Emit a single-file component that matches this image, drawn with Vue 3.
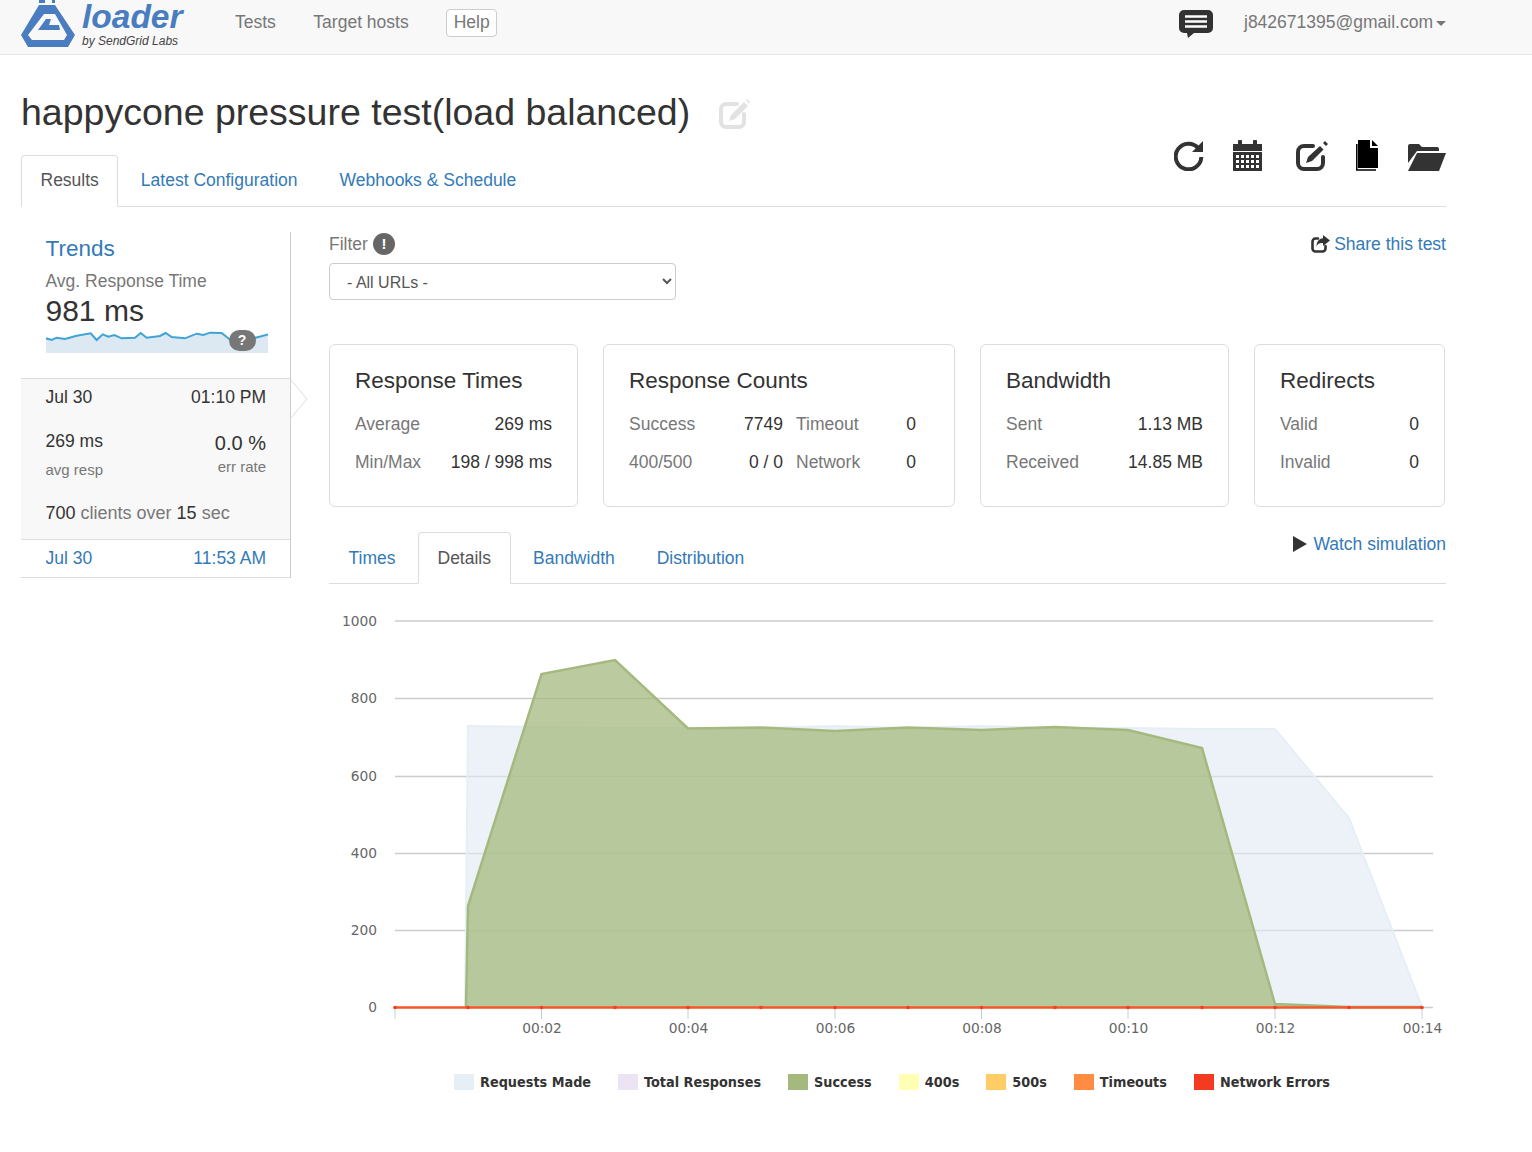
<script setup>
const sparkLine = "78,340 95,345 110,338 135,342 170,332 212,325 230,345 248,328 265,335 283,330 305,340 345,338 362,324 380,338 420,333 437,324 455,336 495,340 530,326 550,330 570,323 605,324 625,340 640,352 700,340 745,328";
const sparkArea = sparkLine + " 745,384 78,384";

const cards = [
  { title: "Response Times", cls: "c1", rows: [["Average", "269 ms"], ["Min/Max", "198 / 998 ms"]] },
  { title: "Response Counts", cls: "c2", rows: [["Success", "7749"], ["Timeout", "0"], ["400/500", "0 / 0"], ["Network", "0"]] },
  { title: "Bandwidth", cls: "c3", rows: [["Sent", "1.13 MB"], ["Received", "14.85 MB"]] },
  { title: "Redirects", cls: "c4", rows: [["Valid", "0"], ["Invalid", "0"]] }
];

const gridLines = [
  { y: 621, label: "1000" },
  { y: 698.5, label: "800" },
  { y: 776.5, label: "600" },
  { y: 853.5, label: "400" },
  { y: 930.5, label: "200" },
  { y: 1007.5, label: "0" }
];
const xTicks = [
  { x: 395, label: "" },
  { x: 541.5, label: "00:02" },
  { x: 688, label: "00:04" },
  { x: 835, label: "00:06" },
  { x: 981.5, label: "00:08" },
  { x: 1128, label: "00:10" },
  { x: 1275, label: "00:12" },
  { x: 1422, label: "00:14" }
];
const dots = [395, 468, 541.5, 615, 688, 761, 835, 908, 981.5, 1055, 1128, 1202, 1275, 1349, 1422];

const requests = "395,1007 465,1007 468,726 541,727 615,728 688,728 761,728 835,726 908,728 981,726 1055,728 1128,728 1202,729 1275,729 1349,818 1422,1007";
const success = "466,1007 468,906 541.5,674 615,660 688,728.5 761,727.5 835,731 908,727.5 981.5,730 1055,727 1128,730 1202,748 1275,1004 1349,1007 1422,1007";

const legend = [
  { name: "Requests Made", color: "#e6eff6" },
  { name: "Total Responses", color: "#ede4f3" },
  { name: "Success", color: "#a5b97f" },
  { name: "400s", color: "#ffffb3" },
  { name: "500s", color: "#ffcc66" },
  { name: "Timeouts", color: "#ff8c42" },
  { name: "Network Errors", color: "#f43b22" }
];
</script>

<template>
  <nav class="navbar">
    <div class="brand">
      <svg class="logo" width="56" height="48" viewBox="20 0 56 48">
        <path fill="#4a7dbf" fill-rule="evenodd" d="M39 5h16l20 30-7 12H28l-7-12zM44 14 28 35l4 5h32l3-5-12-21z" />
        <path fill="#4a7dbf" d="M46 19h5l-2 6h10l1 5H38z" />
        <path fill="#4a7dbf" d="M39 0h6v3h-6zM52 0h3v3h-3z" />
      </svg>
      <div class="brand-text">
        <span class="brand-name">loader</span>
        <span class="brand-sub">by SendGrid Labs</span>
      </div>
    </div>
    <a class="nav-link first">Tests</a>
    <a class="nav-link">Target hosts</a>
    <a class="help">Help</a>
    <svg class="msg" width="34" height="28" viewBox="0 0 34 28">
      <path fill="#333" d="M5 0h24a5 5 0 0 1 5 5v13a5 5 0 0 1-5 5H15l-6 5-1-5H5a5 5 0 0 1-5-5V5a5 5 0 0 1 5-5z" />
      <path fill="none" stroke="#fff" stroke-width="2.400" d="M6 6.500h22M6 11.500h22M6 16.500h22" />
    </svg>
    <span class="user">j842671395@gmail.com<i class="caret"></i></span>
  </nav>

  <main class="page">
    <h1 class="title">
      happycone pressure test(load balanced)
      <svg class="title-edit" width="31" height="30" viewBox="0 0 31 30">
        <path fill="none" stroke="#e2e2e2" stroke-width="4" stroke-linecap="round" d="M18 5H7a5 5 0 0 0-5 5v13a5 5 0 0 0 5 5h13a5 5 0 0 0 5-5v-8" />
        <path fill="#e2e2e2" d="M25 3l4 4-13 13-6 2 2-6zM27 1l1-1 3 3-1 2z" />
      </svg>
    </h1>

    <div class="tab-row">
      <div class="tabs">
        <a class="tab active">Results</a>
        <a class="tab">Latest Configuration</a>
        <a class="tab">Webhooks &amp; Schedule</a>
      </div>
      <div class="actions">
        <svg width="30" height="31" viewBox="0 0 30 31">
          <path fill="none" stroke="#333" stroke-width="4" d="M24.500 8.500A12.800 12.800 0 1 0 27.300 17" />
          <path fill="#333" d="M29 1v11H18z" />
        </svg>
        <svg width="29" height="31" viewBox="0 0 29 31">
          <path fill="#333" d="M0 4h5V1a1 1 0 0 1 1-1h2a1 1 0 0 1 1 1v3h11V1a1 1 0 0 1 1-1h2a1 1 0 0 1 1 1v3h5v7H0z" />
          <path fill="#333" fill-rule="evenodd" d="M0 12h29v19H0zM3 15v3h3v-3zM8 15v3h3v-3zM13 15v3h3v-3zM18 15v3h3v-3zM23 15v3h3v-3zM3 20v3h3v-3zM8 20v3h3v-3zM13 20v3h3v-3zM18 20v3h3v-3zM23 20v3h3v-3zM3 25v3h3v-3zM8 25v3h3v-3zM13 25v3h3v-3zM18 25v3h3v-3zM23 25v3h3v-3z" />
        </svg>
        <svg width="32" height="31" viewBox="0 0 32 31">
          <path fill="none" stroke="#333" stroke-width="4" stroke-linecap="round" d="M17 6H8a6 6 0 0 0-6 6v11a6 6 0 0 0 6 6h13a6 6 0 0 0 6-6v-6" />
          <path fill="#333" d="M24 6l3.500 3.500L16 21l-6 2 2-6zM27 3l2-2 3 3-2 2z" />
        </svg>
        <svg width="23" height="31" viewBox="0 0 23 31">
          <path fill="#000" d="M2 0h12v8h8v20H2z" />
          <path fill="#000" d="M16 0l6 6h-6z" />
          <path fill="none" stroke="#000" stroke-width="1.500" d="M.800 4v26H20" />
        </svg>
        <svg width="38" height="28" viewBox="0 0 38 28">
          <path fill="#333" d="M0 3a2 2 0 0 1 2-2h9l3 3h15a2 2 0 0 1 2 2v2H9L0 20z" />
          <path fill="#333" d="M9 10h29l-7 18H0z" />
        </svg>
      </div>
    </div>

    <div class="layout">
      <aside class="side">
        <div class="trends">
          <a class="trends-title">Trends</a>
          <div class="trends-label">Avg. Response Time</div>
          <div class="trends-value">981 ms</div>
          <div class="spark">
            <svg width="222" height="28" viewBox="78 300 666 84" preserveAspectRatio="none">
              <polygon :points="sparkArea" fill="#dce9f3" />
              <polyline :points="sparkLine" fill="none" stroke="#3fa4d4" stroke-width="6" />
            </svg>
            <span class="spark-q">?</span>
          </div>
        </div>
        <div class="run selected">
          <div class="run-row"><span>Jul 30</span><span>01:10 PM</span></div>
          <div class="run-stats">
            <div>
              <div class="num">269 ms</div>
              <div class="small">avg resp</div>
            </div>
            <div class="right">
              <div class="num big">0.0 %</div>
              <div class="small up">err rate</div>
            </div>
          </div>
          <div class="clients"><b>700</b> clients over <b>15</b> sec</div>
          <svg class="pointer" width="18" height="40" viewBox="0 0 18 40">
            <polyline points="1,1 17,20 1,39" fill="#fff" stroke="#ddd" />
          </svg>
        </div>
        <div class="run-row link-row"><span>Jul 30</span><span>11:53 AM</span></div>
      </aside>

      <section class="content">
        <div class="filter-row">
          <div>
            <div class="filter-label">Filter <span class="bang">!</span></div>
            <select class="filter-select">
              <option>- All URLs -</option>
            </select>
          </div>
          <a class="share">
            <svg width="19" height="18" viewBox="0 0 19 18">
              <path fill="none" stroke="#333" stroke-width="2.600" stroke-linecap="round" d="M7 3.500H4.500a3 3 0 0 0-3 3v7a3 3 0 0 0 3 3h7a3 3 0 0 0 3-3V11" />
              <path fill="#333" d="M12 0l7 5.500-7 5.500V8C8 8 6.500 9 5.500 11.500 5.500 6.500 8 3.500 12 3.200z" />
            </svg>
            Share this test
          </a>
        </div>

        <div class="cards">
          <div class="card" v-for="c in cards" :key="c.title" :class="c.cls">
            <h3>{{ c.title }}</h3>
            <div class="rows">
              <div class="stat" v-for="r in c.rows" :key="r[0]">
                <span class="lbl">{{ r[0] }}</span>
                <span>{{ r[1] }}</span>
              </div>
            </div>
          </div>
        </div>

        <div class="tab-row sub">
          <div class="tabs">
            <a class="tab">Times</a>
            <a class="tab active">Details</a>
            <a class="tab">Bandwidth</a>
            <a class="tab">Distribution</a>
          </div>
          <a class="watch"><i class="play"></i>Watch simulation</a>
        </div>

        <svg class="chart" width="1117" height="460" viewBox="329 600 1117 460">
          <g v-for="g in gridLines" :key="g.label">
            <line x1="395" x2="1433" :y1="g.y" :y2="g.y" stroke="#ccc" stroke-width="1.500" />
            <text x="377" :y="g.y + 4.500" text-anchor="end" class="axis">{{ g.label }}</text>
          </g>
          <g v-for="t in xTicks" :key="t.x">
            <line :x1="t.x" :x2="t.x" y1="1008" y2="1019" stroke="#c0d0e0" />
            <text :x="t.x + 0.500" y="1033" text-anchor="middle" class="axis">{{ t.label }}</text>
          </g>
          <polygon :points="requests" fill="#dfe9f2" fill-opacity="0.600" stroke="#e6eff6" stroke-width="2" />
          <polygon :points="success" fill="#a5b97f" fill-opacity="0.750" />
          <polyline :points="success" fill="none" stroke="#a5b97f" stroke-width="2.500" />
          <line x1="395" x2="1422" y1="1007.5" y2="1007.5" stroke="#f4582a" stroke-width="2.500" />
          <circle v-for="d in dots" :key="d" :cx="d" cy="1007.500" r="1.800" fill="#f43b22" />
        </svg>

        <div class="legend">
          <div class="legend-item" v-for="l in legend" :key="l.name">
            <i class="swatch" :style="{ backgroundColor: l.color }"></i>{{ l.name }}
          </div>
        </div>
      </section>
    </div>
  </main>
</template>

<style>
body {
  background: #fff;
  overflow: hidden;
}
</style>

<style scoped>
.navbar {
  display: flex;
  align-items: center;
  height: 54px;
  background: #f8f8f8;
  border-bottom: 1px solid #e7e7e7;
  overflow: hidden;
  font-family: "Liberation Sans", Arial, sans-serif;
  font-size: 17.5px;
  color: #777;
}

.brand {
  display: flex;
  align-items: flex-start;
  width: 214px;
  margin-left: 20px;
  padding-right: 1px;
  box-sizing: border-box;
  height: 54px;
}

.logo {
  flex: none;
}

.brand-text {
  display: flex;
  flex-direction: column;
  margin-left: 6px;
}

.brand-name {
  font-size: 33.500px;
  font-weight: bold;
  font-style: italic;
  color: #4a7dbf;
  line-height: 34px;
}

.brand-sub {
  font-size: 12px;
  font-style: italic;
  color: #444;
  line-height: 14px;
}

.nav-link {
  margin-right: 37.500px;
  margin-top: -10px;
}

.nav-link.first {
  margin-left: 1px;
}

.help {
  margin-top: -8px;
  padding: 2px 6.500px 3px;
  line-height: 21px;
  background: #fff;
  border: 1px solid #ccc;
  border-radius: 4px;
}

.msg {
  margin-left: auto;
  margin-top: -7px;
}

.user {
  display: flex;
  align-items: center;
  margin: -10px 86px 0 31px;
}

.caret {
  width: 0;
  height: 0;
  margin-left: 3px;
  margin-top: 3px;
  border-top: 5px solid #777;
  border-left: 5px solid transparent;
  border-right: 5px solid transparent;
}

.page {
  padding: 0 86px 0 21px;
  font-family: "Liberation Sans", Arial, sans-serif;
  font-size: 17.5px;
  color: #333;
}

.title {
  display: flex;
  align-items: center;
  height: 100px;
  margin: 0;
  font-size: 37.500px;
  font-weight: 500;
  padding-top: 14px;
  box-sizing: border-box;
}

.title-edit {
  margin-left: 29px;
  margin-top: 3px;
}

.tab-row {
  display: flex;
  justify-content: space-between;
  border-bottom: 1px solid #ddd;
  height: 52px;
  box-sizing: border-box;
}

.tabs {
  display: flex;
}

.tab {
  height: 52px;
  box-sizing: border-box;
  padding: 0 18.500px;
  margin-right: 3px;
  line-height: 48px;
  color: #337ab7;
  border: 1px solid transparent;
}

.sub .tab {
  line-height: 50px;
}

.tab.active {
  color: #555;
  background: #fff;
  border-color: #ddd #ddd #fff;
  border-radius: 4px 4px 0 0;
}

.actions {
  display: flex;
  align-items: flex-end;
  margin-top: -16px;
  height: 32px;
}

.actions svg:nth-child(1) {
  margin-right: 29px;
}

.actions svg:nth-child(2) {
  margin-right: 34px;
}

.actions svg:nth-child(3) {
  margin-right: 28px;
}

.actions svg:nth-child(4) {
  margin-right: 29px;
}

.layout {
  display: flex;
  gap: 38px;
  margin-top: 25px;
}

.side {
  flex: none;
  width: 270px;
  height: 346px;
  box-sizing: border-box;
  border-right: 1px solid #ccc;
}

.trends {
  height: 146px;
  padding: 2px 22px 0 24.500px;
  box-sizing: border-box;
}

.trends-title {
  display: block;
  font-size: 22.500px;
  line-height: 30px;
  color: #337ab7;
}

.trends-label {
  margin-top: 4px;
  line-height: 26px;
  color: #777;
}

.trends-value {
  font-size: 30px;
  line-height: 34px;
}

.spark {
  position: relative;
  height: 28px;
  margin-top: -3px;
}

.spark svg {
  display: block;
}

.spark-q {
  position: absolute;
  left: 183px;
  top: 5px;
  width: 27px;
  height: 21px;
  border-radius: 11px;
  background: #777;
  color: #fff;
  font-size: 14px;
  font-weight: bold;
  line-height: 21px;
  text-align: center;
}

.run {
  position: relative;
  height: 162px;
  box-sizing: border-box;
  background: #f8f8f8;
  border-top: 1px solid #ddd;
  border-bottom: 1px solid #ddd;
  padding: 0 24px 0 24.500px;
}

.pointer {
  position: absolute;
  left: 269px;
  top: 0;
}

.run-row {
  display: flex;
  justify-content: space-between;
  line-height: 36px;
}

.run-stats {
  display: flex;
  justify-content: space-between;
  margin-top: 10px;
}

.num {
  line-height: 32px;
}

.num.big {
  font-size: 20px;
  margin-top: 2px;
}

.small {
  font-size: 15px;
  color: #777;
  line-height: 24px;
  margin-top: 1px;
}

.small.up {
  margin-top: -4px;
}

.right {
  text-align: right;
}

.clients {
  margin-top: 19px;
  color: #777;
  font-size: 18px;
  line-height: 24px;
}

.clients b {
  font-weight: normal;
  color: #333;
}

.link-row {
  padding: 0 24px 0 24.500px;
  height: 38px;
  color: #337ab7;
  box-sizing: border-box;
  border-bottom: 1px solid #ddd;
}

.content {
  flex: none;
  width: 1117px;
}

.filter-row {
  display: flex;
  justify-content: space-between;
  align-items: flex-start;
}

.filter-label {
  display: flex;
  align-items: center;
  gap: 5px;
  height: 24px;
  color: #777;
}

.bang {
  width: 22px;
  height: 22px;
  border-radius: 50%;
  background: #666;
  color: #fff;
  font-size: 15px;
  font-weight: bold;
  line-height: 22px;
  text-align: center;
}

.filter-select {
  display: block;
  width: 347px;
  height: 37px;
  margin-top: 7px;
  padding: 1px 13px 0;
  background: #fff;
  border: 1px solid #ccc;
  border-radius: 4px;
  font-family: inherit;
  font-size: 16px;
  color: #555;
}

.share {
  display: flex;
  align-items: center;
  gap: 4px;
  height: 24px;
  color: #337ab7;
}

.cards {
  display: grid;
  grid-template-columns: 249px 352px 249px 191px;
  gap: 25px;
  margin-top: 44px;
}

.card {
  height: 163px;
  box-sizing: border-box;
  padding: 0 25px;
  border: 1px solid #ddd;
  border-radius: 6px;
}

.card h3 {
  margin: 0;
  padding-top: 21px;
  font-size: 22.500px;
  font-weight: 500;
  line-height: 30px;
}

.rows {
  display: grid;
  row-gap: 14px;
  margin-top: 16px;
}

.c2 .rows {
  grid-template-columns: 154px 120px;
  column-gap: 13px;
}

.stat {
  display: flex;
  justify-content: space-between;
  line-height: 24px;
}

.lbl {
  color: #777;
}

.sub {
  margin-top: 25px;
}

.watch {
  display: flex;
  align-items: center;
  height: 24px;
  color: #337ab7;
}

.play {
  width: 0;
  height: 0;
  margin-right: 6px;
  border-left: 14px solid #333;
  border-top: 8px solid transparent;
  border-bottom: 8px solid transparent;
}

.chart {
  display: block;
  margin-top: 16px;
}

.axis {
  font-family: "DejaVu Sans", sans-serif;
  font-size: 13.750px;
  fill: #666;
}

.legend {
  display: flex;
  gap: 27px;
  margin-top: 13px;
  padding-left: 125px;
  font-family: "DejaVu Sans", sans-serif;
  font-stretch: condensed;
  font-size: 14.300px;
  font-weight: bold;
  color: #333;
  line-height: 18px;
}

.legend-item {
  display: flex;
  align-items: center;
  white-space: nowrap;
}

.swatch {
  width: 20px;
  height: 16px;
  margin-right: 6px;
}
</style>
